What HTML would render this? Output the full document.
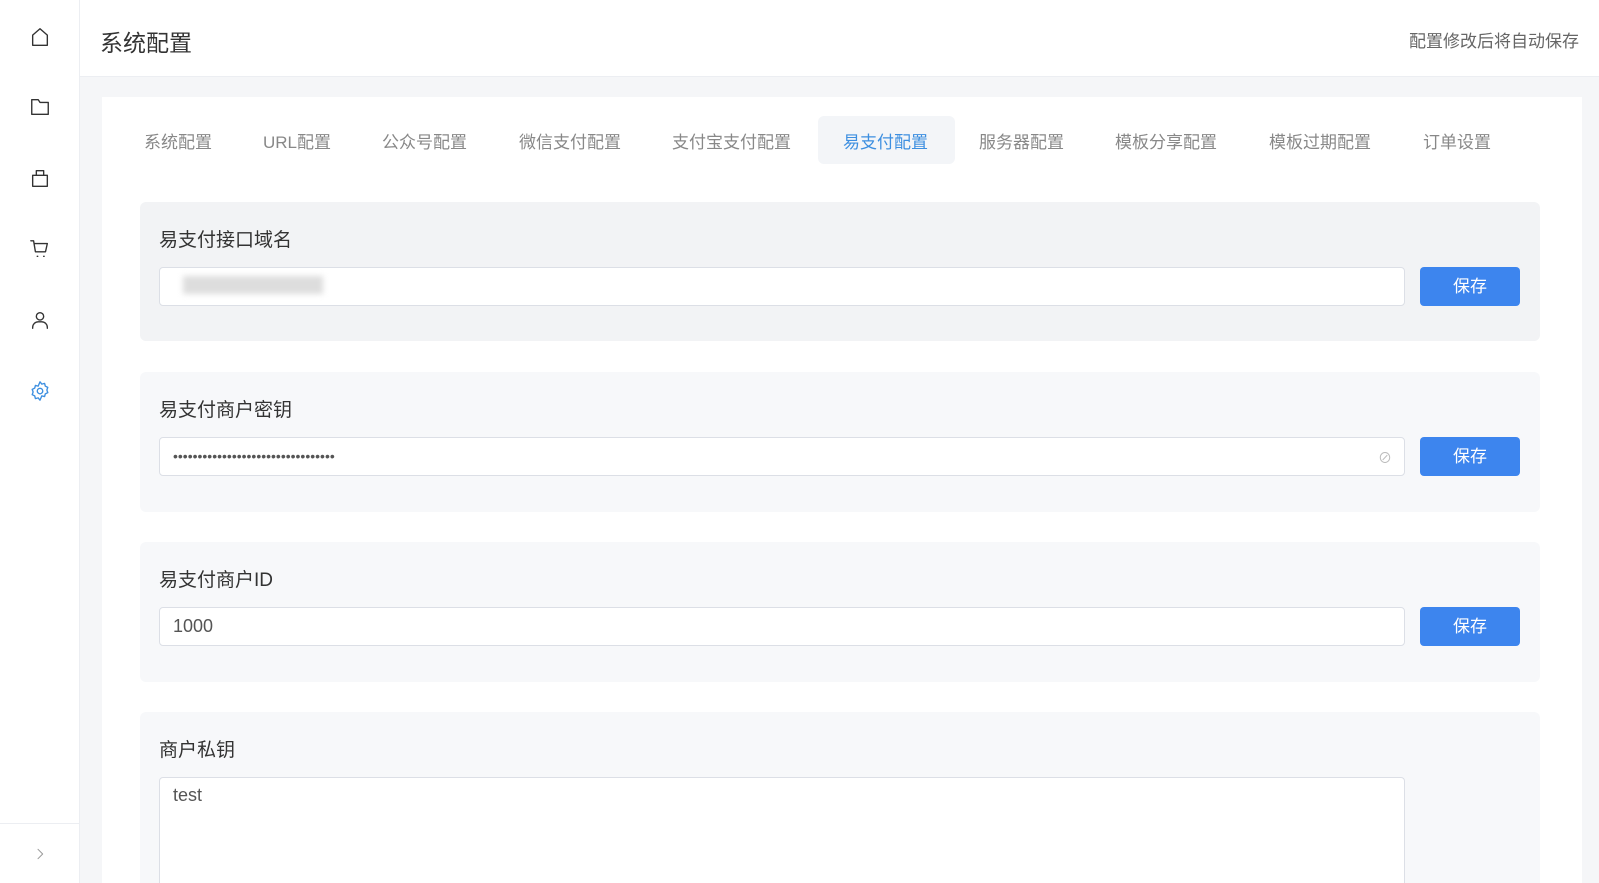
<!DOCTYPE html>
<html style="overflow:hidden;height:883px"><head><meta charset="utf-8"><style>
*{box-sizing:border-box;margin:0;padding:0}
body{width:1599px;height:883px;overflow:hidden;background:#f5f6f8;font-family:"Liberation Sans","Noto Sans CJK SC",sans-serif;position:relative;color:#333}
.side{position:absolute;left:0;top:0;width:80px;height:883px;background:#fff;border-right:1px solid #eceef2}
.side svg{position:absolute;left:29px;width:22px;height:22px;fill:none;stroke:#333;stroke-width:1.5;stroke-linecap:round;stroke-linejoin:round}
.hdr{position:absolute;left:80px;top:0;right:0;height:77px;background:#fff;border-bottom:1px solid #eceef2}
.hdr .t{position:absolute;left:20px;top:24px;font-size:23px;color:#333}
.hdr .r{position:absolute;right:20px;top:27px;font-size:17px;color:#666}
.card{position:absolute;left:102px;top:97px;width:1480px;height:786px;background:#fff}
.tab{position:absolute;top:128px;font-size:17px;color:#888}
.act{position:absolute;left:818px;top:116px;width:137px;height:48px;background:#f3f5f8;border-radius:6px}
.sec{position:absolute;left:140px;width:1400px;background:#f7f8fa;border-radius:6px}
.lbl{position:absolute;left:159px;font-size:19px;color:#333}
.inp{position:absolute;left:159px;width:1246px;height:39px;background:#fff;border:1px solid #dcdfe6;border-radius:4px;font-size:18px;color:#555;padding:8px 13px}
.btn{position:absolute;left:1420px;width:100px;height:39px;background:#3d85ee;border-radius:4px;color:#fff;font-size:17px;text-align:center;line-height:39px}
</style></head><body>
<div class="side">
<svg style="top:26px" viewBox="0 0 24 24"><path d="M4 21V10l8-7 8 7v11z"/></svg>
<svg style="top:96px" viewBox="0 0 24 24"><path d="M3 20V4h7l2 3h9v13z"/></svg>
<svg style="top:167px" viewBox="0 0 24 24"><path d="M4 21V9h16v12zM8 9V4h8v5"/></svg>
<svg style="top:238px" viewBox="0 0 24 24"><path d="M2 3h3l2 12h11l2-9H6M9 20h.5M16 20h.5"/></svg>
<svg style="top:309px" viewBox="0 0 24 24"><circle cx="12" cy="8" r="4"/><path d="M4 21v-1a6 6 0 016-6h4a6 6 0 016 6v1"/></svg>
<svg style="top:380px;stroke:#3d8fe0" viewBox="0 0 24 24"><circle cx="12" cy="12" r="3"/><path d="M12 2l2 2.5 3-.8.8 3 2.7 1.3-1 2.9 1 2.9-2.7 1.3-.8 3-3-.8L12 22l-2-2.5-3 .8-.8-3L3.5 16l1-2.9-1-2.9 2.7-1.3.8-3 3 .8z"/></svg>
<div style="position:absolute;left:0;top:823px;width:79px;border-top:1px solid #eceef2"></div>
<svg style="top:846px;left:32px;width:16px;height:16px;stroke:#999" viewBox="0 0 24 24"><path d="M9 5l7 7-7 7"/></svg>
</div>
<div class="hdr"><div class="t">系统配置</div><div class="r">配置修改后将自动保存</div></div>
<div class="card"></div>
<div class="act"></div>
<div class="tab" style="left:144px">系统配置</div>
<div class="tab" style="left:263px">URL配置</div>
<div class="tab" style="left:382px">公众号配置</div>
<div class="tab" style="left:519px">微信支付配置</div>
<div class="tab" style="left:672px">支付宝支付配置</div>
<div class="tab" style="left:843px;color:#3d8fe0">易支付配置</div>
<div class="tab" style="left:979px">服务器配置</div>
<div class="tab" style="left:1115px">模板分享配置</div>
<div class="tab" style="left:1269px">模板过期配置</div>
<div class="tab" style="left:1423px">订单设置</div>

<div class="sec" style="top:202px;height:139px;background:#f2f3f5"></div>
<div class="lbl" style="top:225px">易支付接口域名</div>
<div class="inp" style="top:267px"><span style="display:inline-block;width:140px;height:18px;background:#ddd;filter:blur(3px);margin-left:10px"></span></div>
<div class="btn" style="top:267px">保存</div>

<div class="sec" style="top:372px;height:140px"></div>
<div class="lbl" style="top:395px">易支付商户密钥</div>
<div class="inp" style="top:437px;font-size:14px;padding-top:10px">•••••••••••••••••••••••••••••••••<span style="position:absolute;right:12px;top:10px;color:#bbb">⊘</span></div>
<div class="btn" style="top:437px">保存</div>

<div class="sec" style="top:542px;height:140px"></div>
<div class="lbl" style="top:565px">易支付商户ID</div>
<div class="inp" style="top:607px">1000</div>
<div class="btn" style="top:607px">保存</div>

<div class="sec" style="top:712px;height:171px;border-radius:6px 6px 0 0"></div>
<div class="lbl" style="top:735px">商户私钥</div>
<div class="inp" style="top:777px;height:106px;padding-top:7px;border-bottom:none;border-radius:4px 4px 0 0">test</div>
</body></html>
